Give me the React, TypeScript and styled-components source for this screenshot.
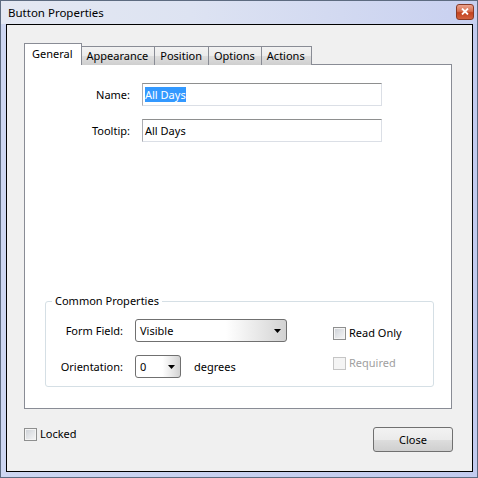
import React from 'react';
import styled, { createGlobalStyle, css } from 'styled-components';

const GlobalStyle = createGlobalStyle`
  html, body {
    margin: 0;
    padding: 0;
    background: #ffffff;
  }
  body {
    font-family: 'Noto Sans', 'Open Sans', sans-serif;
    font-size: 11px;
    color: #000000;
  }
`;

const Window = styled.div`
  box-sizing: border-box;
  width: 478px;
  height: 478px;
  display: flex;
  flex-direction: column;
  padding: 0 4px 5px 5px;
  border: 1px solid #5d6b80;
  background: linear-gradient(to right, #cdd6f1 0%, #c3cbee 100%);
`;

const TitleBar = styled.div`
  height: 23px;
  display: flex;
  align-items: center;
  justify-content: space-between;
  margin: 0 -4px 0 -5px;
  padding: 0 3px 0 7px;
  background: linear-gradient(to right, #e4e8f2 0%, #dde3f2 40%, #c8d0f0 100%);
`;

const Title = styled.span`
  font-size: 11.5px;
  line-height: 16px;
  color: #000000;
`;

const CloseX = styled.button`
  width: 18px;
  height: 16px;
  padding: 0;
  margin-top: -2px;
  display: flex;
  align-items: center;
  justify-content: center;
  border: 1px solid #8a3a26;
  border-radius: 3px;
  background: linear-gradient(to bottom, #eba38e 0%, #d66f50 45%, #c2421f 55%, #d2613e 100%);
`;

const Client = styled.div`
  flex: 1;
  display: flex;
  flex-direction: column;
  border: 1px solid #000000;
  background: #f0f0f0;
  padding: 18px 20px 0 17px;
`;

const TabStrip = styled.div`
  display: flex;
  align-items: flex-end;
  height: 22px;
  position: relative;
  z-index: 1;
  margin-bottom: -1px;
`;

const Tab = styled.div<{ $active?: boolean }>`
  box-sizing: border-box;
  height: 19px;
  padding: 0 6px 0 5px;
  display: flex;
  align-items: center;
  border: 1px solid #898c95;
  border-bottom: none;
  margin-left: -1px;
  background: linear-gradient(to bottom, #f2f2f2 0%, #ebebeb 50%, #dddddd 51%, #cfcfcf 100%);
  line-height: 16px;
  ${({ $active }) =>
    $active &&
    css`
      height: 22px;
      margin-left: 0;
      padding: 0 8px 2px 7px;
      background: #ffffff;
      z-index: 2;
    `}
`;

const Panel = styled.div`
  box-sizing: border-box;
  height: 345px;
  display: flex;
  flex-direction: column;
  background: #ffffff;
  border: 1px solid #898c95;
  padding: 18px 20px 21px 20px;
`;

const FieldGrid = styled.div`
  display: grid;
  grid-template-columns: 85px 240px;
  column-gap: 12px;
  row-gap: 13px;
  align-items: center;
`;

const Label = styled.label<{ $width?: number }>`
  text-align: right;
  line-height: 16px;
  white-space: nowrap;
  ${({ $width }) =>
    $width &&
    css`
      width: ${$width}px;
      flex: none;
    `}
`;

const TextBox = styled.div`
  box-sizing: border-box;
  height: 23px;
  display: flex;
  align-items: center;
  padding: 0 2px;
  border: 1px solid #dbdfe6;
  border-top-color: #8e8f8f;
  border-left-color: #abadb3;
  background: #ffffff;
`;

const Selected = styled.span`
  background: #3399ff;
  color: #ffffff;
  line-height: 15px;
`;

const Group = styled.fieldset`
  box-sizing: border-box;
  width: 389px;
  margin: auto 0 0 0;
  padding: 11px 0 8px 14px;
  border: 1px solid #d5dfe5;
  border-radius: 3px;
  display: flex;
  align-items: flex-start;
`;

const Legend = styled.legend`
  padding: 0 3px;
  margin-left: -8px;
  line-height: 14px;
`;

const GroupRows = styled.div`
  display: flex;
  flex-direction: column;
  gap: 13px;
`;

const Row = styled.div`
  display: flex;
  align-items: center;
  gap: 12px;
`;

const Combo = styled.div<{ $width: number }>`
  box-sizing: border-box;
  width: ${({ $width }) => $width}px;
  height: 23px;
  display: flex;
  align-items: center;
  justify-content: space-between;
  padding: 0 0 0 4px;
  border: 1px solid #707070;
  border-radius: 3px;
  background: linear-gradient(to right, #ffffff 0%, #ffffff 60%, #e4e4e4 85%, #d2d2d2 100%);
`;

const ComboArrow = styled.span`
  width: 18px;
  display: flex;
  justify-content: center;
`;

const Degrees = styled.span`
  margin-left: 1px;
  line-height: 16px;
`;

const CheckCol = styled.div`
  margin-left: 46px;
  margin-top: 6px;
  display: flex;
  flex-direction: column;
  gap: 14px;
`;

const CheckRow = styled.label<{ $disabled?: boolean }>`
  display: flex;
  align-items: center;
  gap: 3px;
  line-height: 16px;
  white-space: nowrap;
  color: ${({ $disabled }) => ($disabled ? '#a0a0a0' : '#000000')};
`;

const Box = styled.span<{ $disabled?: boolean }>`
  box-sizing: border-box;
  width: 13px;
  height: 13px;
  border: 1px solid ${({ $disabled }) => ($disabled ? '#c5c5c5' : '#8e8f8f')};
  background: ${({ $disabled }) =>
    $disabled
      ? '#f4f4f4'
      : 'linear-gradient(135deg, #cbcfd5 0%, #e2e4e7 50%, #f6f6f6 100%)'};
  box-shadow: inset 0 0 0 1px #f4f4f4;
`;

const Footer = styled.div`
  display: flex;
  align-items: flex-start;
  justify-content: space-between;
  margin: 18px -1px 0 0;
`;

const LockedWrap = styled.div`
  margin-top: -1px;
`;

const Button = styled.button`
  box-sizing: border-box;
  width: 80px;
  height: 25px;
  border: 1px solid #707070;
  border-radius: 3px;
  background: linear-gradient(to bottom, #f2f2f2 0%, #ebebeb 50%, #dddddd 51%, #cfcfcf 100%);
  font-family: inherit;
  font-size: 11px;
  color: #000000;
  padding: 0;
`;

function Arrow() {
  return (
    <svg width="7" height="4" viewBox="0 0 7 4">
      <path d="M0 0H7L3.5 4Z" fill="#000000" />
    </svg>
  );
}

function Check({ label, disabled }: { label: string; disabled?: boolean }) {
  return (
    <CheckRow $disabled={disabled}>
      <Box $disabled={disabled} />
      {label}
    </CheckRow>
  );
}

const tabs = ['General', 'Appearance', 'Position', 'Options', 'Actions'];

export default function App() {
  return (
    <>
      <GlobalStyle />
      <Window>
        <TitleBar>
          <Title>Button Properties</Title>
          <CloseX aria-label="Close window">
            <svg width="8" height="7" viewBox="0 0 8 7">
              <path d="M1 0.5L7 6.5M7 0.5L1 6.5" stroke="#ffffff" strokeWidth="1.8" />
            </svg>
          </CloseX>
        </TitleBar>
        <Client>
          <TabStrip>
            {tabs.map((t, i) => (
              <Tab key={t} $active={i === 0}>
                {t}
              </Tab>
            ))}
          </TabStrip>
          <Panel>
            <FieldGrid>
              <Label>Name:</Label>
              <TextBox>
                <Selected>All Days</Selected>
              </TextBox>
              <Label>Tooltip:</Label>
              <TextBox>All Days</TextBox>
            </FieldGrid>
            <Group>
              <Legend>Common Properties</Legend>
              <GroupRows>
                <Row>
                  <Label $width={63}>Form Field:</Label>
                  <Combo $width={152}>
                    Visible
                    <ComboArrow>
                      <Arrow />
                    </ComboArrow>
                  </Combo>
                </Row>
                <Row>
                  <Label $width={63}>Orientation:</Label>
                  <Combo $width={46}>
                    0
                    <ComboArrow>
                      <Arrow />
                    </ComboArrow>
                  </Combo>
                  <Degrees>degrees</Degrees>
                </Row>
              </GroupRows>
              <CheckCol>
                <Check label="Read Only" />
                <Check label="Required" disabled />
              </CheckCol>
            </Group>
          </Panel>
          <Footer>
            <LockedWrap>
              <Check label="Locked" />
            </LockedWrap>
            <Button>Close</Button>
          </Footer>
        </Client>
      </Window>
    </>
  );
}
